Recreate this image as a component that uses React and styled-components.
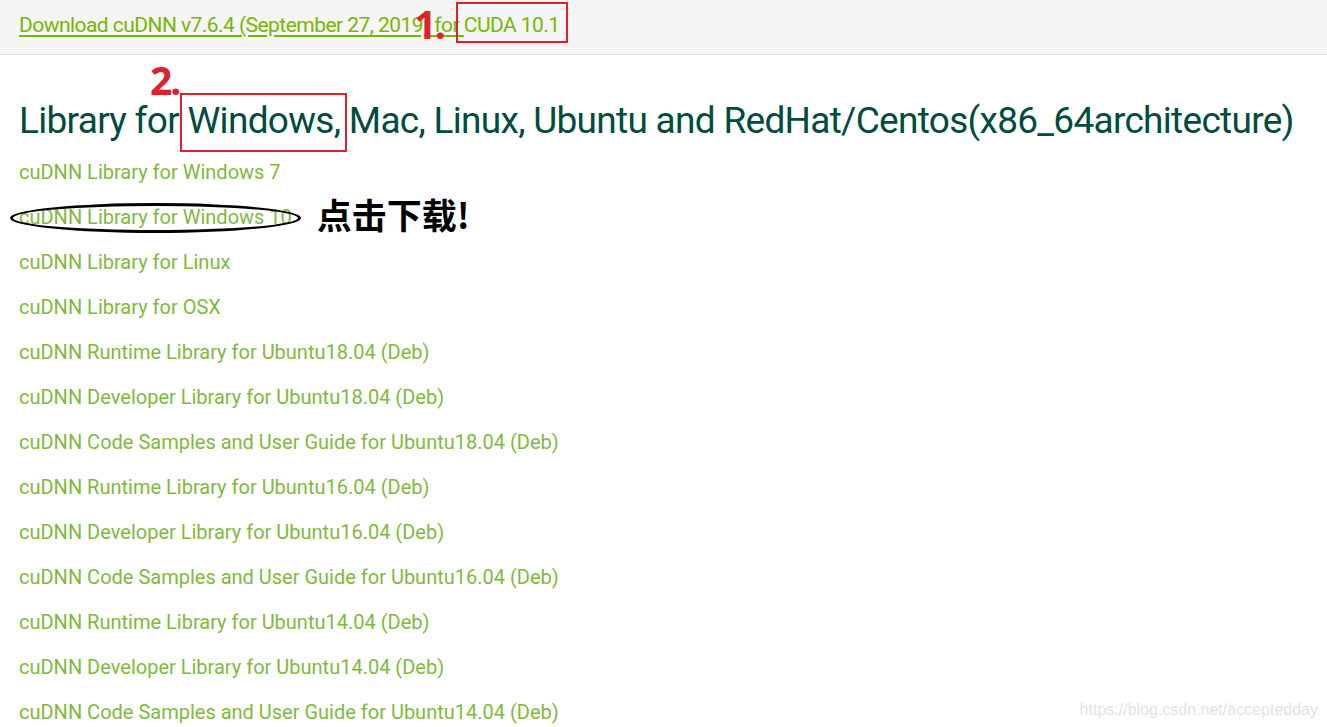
import React from 'react';
import styled, { createGlobalStyle } from 'styled-components';

const GlobalStyle = createGlobalStyle`
  html, body {
    margin: 0;
    padding: 0;
    background: #ffffff;
    overflow: hidden;
  }
  body {
    font-family: Roboto, "Liberation Sans", sans-serif;
  }
`;

const items = [
  'cuDNN Library for Windows 7',
  'cuDNN Library for Windows 10',
  'cuDNN Library for Linux',
  'cuDNN Library for OSX',
  'cuDNN Runtime Library for Ubuntu18.04 (Deb)',
  'cuDNN Developer Library for Ubuntu18.04 (Deb)',
  'cuDNN Code Samples and User Guide for Ubuntu18.04 (Deb)',
  'cuDNN Runtime Library for Ubuntu16.04 (Deb)',
  'cuDNN Developer Library for Ubuntu16.04 (Deb)',
  'cuDNN Code Samples and User Guide for Ubuntu16.04 (Deb)',
  'cuDNN Runtime Library for Ubuntu14.04 (Deb)',
  'cuDNN Developer Library for Ubuntu14.04 (Deb)',
  'cuDNN Code Samples and User Guide for Ubuntu14.04 (Deb)',
];

const App = () => {
  return (
    <>
      <GlobalStyle />
      <Page>
        <TopBar>
          <TopLink href="#">
            Download cuDNN v7.6.4 (September 27, 2019) for{' '}
            <Marked>
              <StepNum $gap={20} $top={-12}>1.</StepNum>
              CUDA 10.1
              <RedBox $x={8} $top={-11} $bottom={-6} />
            </Marked>
          </TopLink>
        </TopBar>

        <Heading>
          Library for{' '}
          <Marked>
            <StepNum $gap={8} $top={-37}>2.</StepNum>
            Windows,
            <RedBox $x={7} $top={-1} $bottom={-4} />
          </Marked>{' '}
          Mac, Linux, Ubuntu and RedHat/Centos(x86_64architecture)
        </Heading>

        <List>
          {items.map((label, i) => (
            <Row key={label}>
              {i === 1 ? (
                <>
                  <Circled>
                    <ItemLink href="#">{label}</ItemLink>
                    <Ellipse />
                  </Circled>
                  <Note>点击下载!</Note>
                </>
              ) : (
                <ItemLink href="#">{label}</ItemLink>
              )}
            </Row>
          ))}
        </List>

        <Watermark>https://blog.csdn.net/acceptedday</Watermark>
      </Page>
    </>
  );
};

export default App;

const Page = styled.div`
  position: relative;
  height: 727px;
  overflow: hidden;
`;

const TopBar = styled.div`
  height: 55px;
  box-sizing: border-box;
  background-color: #f5f5f5;
  border-bottom: 1px solid #dcdcdc;
  display: flex;
  align-items: center;
  padding: 0 19px 4px;
`;

const TopLink = styled.a`
  font-size: 21px;
  color: #76b900;
  text-decoration: underline;
  text-underline-offset: 3px;
  letter-spacing: -0.55px;
`;

const Marked = styled.span`
  position: relative;
  display: inline-block;
`;

const StepNum = styled.span`
  position: absolute;
  right: calc(100% + ${(p) => p.$gap}px);
  top: ${(p) => p.$top}px;
  font-family: "Open Sans", "Liberation Sans", sans-serif;
  font-weight: 700;
  font-size: 39px;
  line-height: 1.2;
  color: #e3202a;
  letter-spacing: -2px;
  white-space: nowrap;
`;

const RedBox = styled.span`
  position: absolute;
  left: -${(p) => p.$x}px;
  right: -${(p) => p.$x}px;
  top: ${(p) => p.$top}px;
  bottom: ${(p) => p.$bottom}px;
  border: 2px solid #e3202a;
`;

const Heading = styled.h1`
  margin: 39px 0 0;
  padding: 0 19px;
  font-size: 37px;
  line-height: 54px;
  font-weight: 400;
  color: #004c40;
  letter-spacing: -0.7px;
  white-space: nowrap;
`;

const List = styled.div`
  display: flex;
  flex-direction: column;
  padding: 1px 19px 0;
`;

const Row = styled.div`
  height: 45px;
  display: flex;
  align-items: center;
`;

const ItemLink = styled.a`
  font-size: 20px;
  color: #7fba3c;
  text-decoration: none;
`;

const Circled = styled.span`
  position: relative;
  display: inline-block;
`;

const Ellipse = styled.span`
  position: absolute;
  left: -9px;
  right: -9px;
  top: -2px;
  bottom: -4px;
  border: 3px solid #000;
  border-radius: 50%;
`;

const Note = styled.span`
  margin-left: 25px;
  margin-bottom: 6px;
  font-family: "Noto Sans CJK SC", sans-serif;
  font-weight: 700;
  font-size: 35px;
  line-height: 1;
  color: #000;
`;

const Watermark = styled.div`
  position: absolute;
  right: 9px;
  bottom: 8px;
  font-family: "Liberation Sans", Arial, sans-serif;
  font-size: 16px;
  color: #e3e3e3;
`;
